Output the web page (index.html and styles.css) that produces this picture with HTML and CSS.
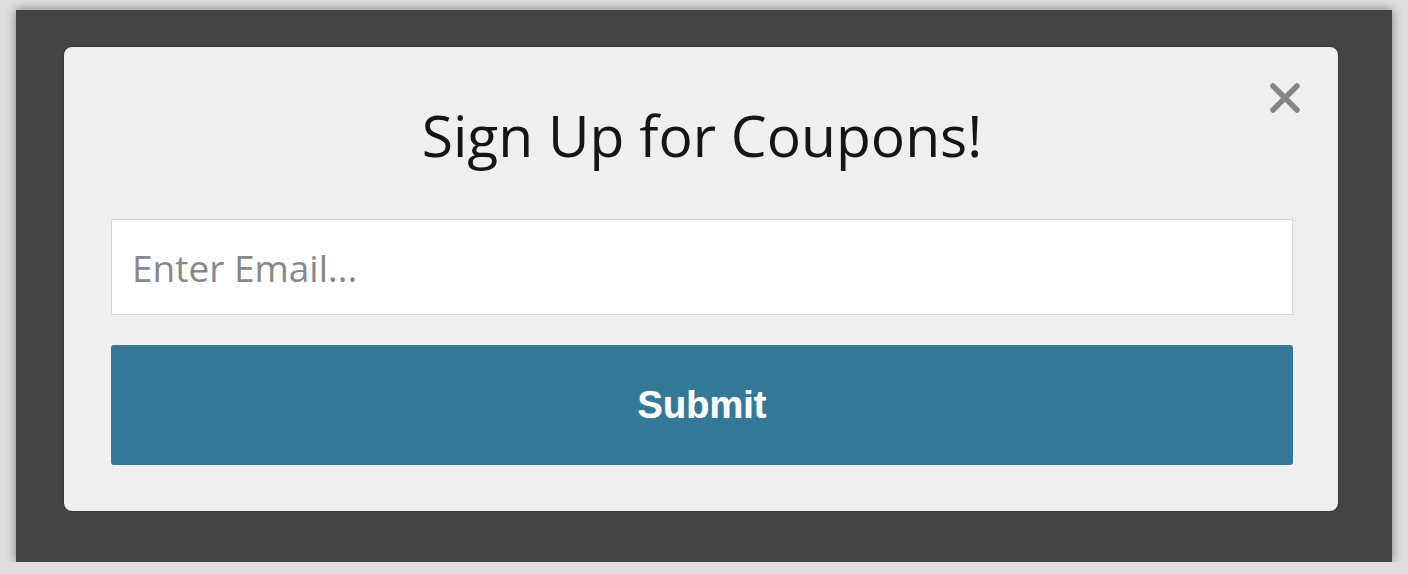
FILE: index.html
```html
<!DOCTYPE html>
<html>
<head>
<meta charset="utf-8">
<title>Sign Up for Coupons</title>
<link rel="stylesheet" href="styles.css">
</head>
<body>

   <div class="overlay">

      <div class="popup">
         <button class="close_button" aria-label="Close">
            <svg width="32" height="32" viewBox="0 0 32 32">
               <path d="M4 4 L28 28 M28 4 L4 28" stroke="#858585" stroke-width="5.5" stroke-linecap="round"/>
            </svg>
         </button>

         <h1 class="popup_title">Sign Up for Coupons!</h1>

         <input class="email_input" type="text" placeholder="Enter Email...">

         <button class="submit_button">Submit</button>
      </div> <!-- end of popup -->

   </div> <!-- end of overlay -->

</body>
</html>
```

FILE: styles.css
```css
body
{
   margin: 0 ;
   background-color: #dedede ;
   font-family: "Open Sans", "Liberation Sans", sans-serif ;
}

.overlay
{
   margin: 10px 16px 0 16px ;
   width: 1376px ;
   height: 552px ;
   box-sizing: border-box ;
   padding: 37px 54px 51px 48px ;
   background-color: #444444 ;
   box-shadow: 0 0 10px rgba( 0, 0, 0, 0.45 ) ;
}

.popup
{
   position: relative ;
   box-sizing: border-box ;
   height: 464px ;
   padding: 60px 45px 46px 47px ;
   display: flex ;
   flex-direction: column ;
   background-color: #efefef ;
   border-radius: 8px ;
   box-shadow: 0 0 2px rgba( 0, 0, 0, 0.6 ) ;
}

.close_button
{
   position: absolute ;
   top: 35px ;
   right: 37px ;
   width: 32px ;
   height: 32px ;
   padding: 0 ;
   border: none ;
   background: none ;
}

.close_button svg
{
   display: block ;
}

.popup_title
{
   margin: 0 ;
   text-align: center ;
   font-size: 57px ;
   font-weight: 400 ;
   line-height: 1 ;
   color: #151515 ;
}

.email_input
{
   margin-top: 55px ;
   height: 96px ;
   box-sizing: border-box ;
   padding: 0 20px ;
   border: 1px solid #d6d6d6 ;
   background-color: #ffffff ;
   font-family: "Open Sans", sans-serif ;
   font-size: 37px ;
   color: #333333 ;
   outline: none ;
}

.email_input::placeholder
{
   color: #888888 ;
}

.submit_button
{
   margin-top: 30px ;
   height: 120px ;
   border: none ;
   border-radius: 3px ;
   background-color: #337897 ;
   color: #ffffff ;
   font-family: "Liberation Sans", Arial, sans-serif ;
   font-weight: bold ;
   font-size: 38px ;
   text-shadow: 0 0 1px rgba( 255, 255, 255, 0.6 ) ;
}
```
